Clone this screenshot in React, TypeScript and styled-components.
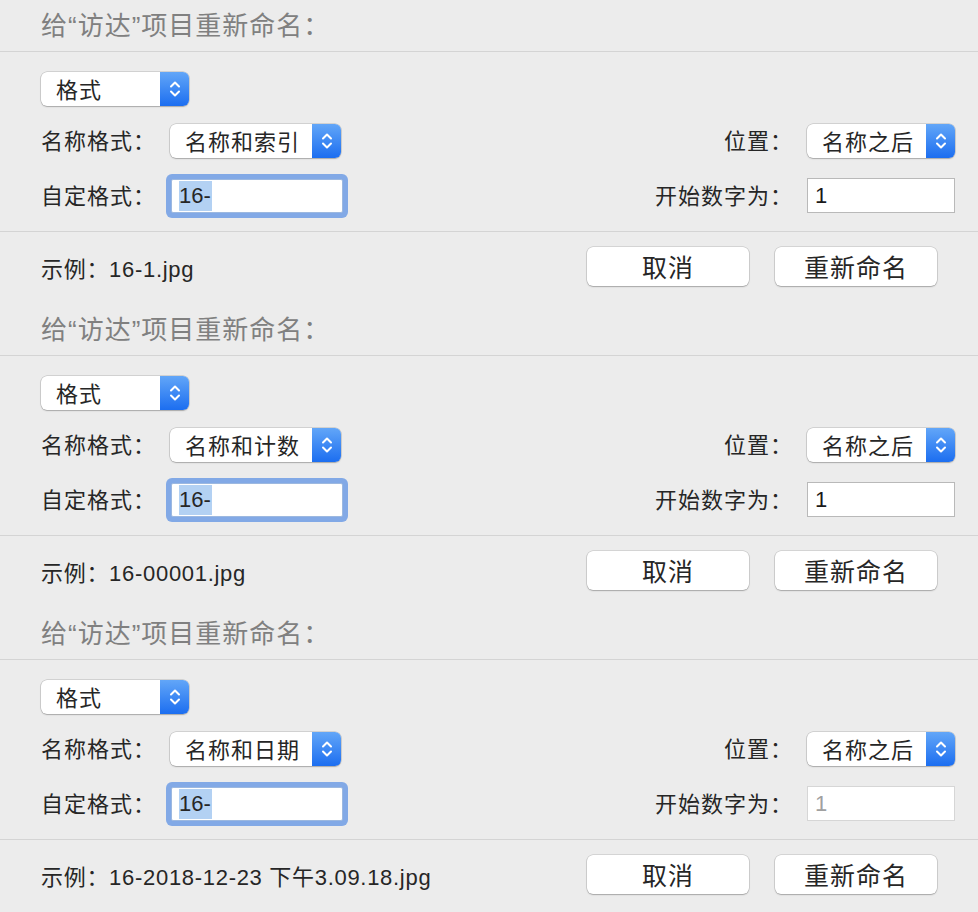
import React from 'react';
import styled, { createGlobalStyle } from 'styled-components';

const GlobalStyle = createGlobalStyle`
	body {
		margin: 0;
		background: #ececec;
		font-family: "Liberation Sans", "Noto Sans CJK SC", sans-serif;
		color: #262626;
	}
`;

type DialogData = {
	format: string;
	example: string;
	startDisabled?: boolean;
};

const dialogs: DialogData[] = [
	{ format: '名称和索引', example: '16-1.jpg' },
	{ format: '名称和计数', example: '16-00001.jpg' },
	{ format: '名称和日期', example: '16-2018-12-23 下午3.09.18.jpg', startDisabled: true },
];

const Stepper = () => (
	<StepperBox>
		<svg width="14" height="22" viewBox="0 0 14 22" fill="none">
			<path d="M3 8.5 L7 4.5 L11 8.5" stroke="#fff" strokeWidth="2" strokeLinecap="round" strokeLinejoin="round" />
			<path d="M3 13.5 L7 17.5 L11 13.5" stroke="#fff" strokeWidth="2" strokeLinecap="round" strokeLinejoin="round" />
		</svg>
	</StepperBox>
);

const Popup = (props: { text: string; width: number }) => (
	<PopupBox $width={props.width}>
		<PopupText>{props.text}</PopupText>
		<Stepper />
	</PopupBox>
);

const RenameDialog = ({ data }: { data: DialogData }) => (
	<Dialog>
		<TitleBar>给“访达”项目重新命名：</TitleBar>
		<Body>
			<FirstRow>
				<Popup text="格式" width={148} />
			</FirstRow>
			<FieldRow $h={34} $mb={15}>
				<Group>
					<Label>名称格式：</Label>
					<Popup text={data.format} width={171} />
				</Group>
				<Group>
					<RightLabel>位置：</RightLabel>
					<Popup text="名称之后" width={148} />
				</Group>
			</FieldRow>
			<FieldRow $h={45} $mb={0}>
				<Group>
					<Label>自定格式：</Label>
					<FocusInput>
						<Selected>16-</Selected>
					</FocusInput>
				</Group>
				<Group>
					<RightLabel>开始数字为：</RightLabel>
					<NumberInput $disabled={!!data.startDisabled}>1</NumberInput>
				</Group>
			</FieldRow>
		</Body>
		<Footer>
			<Example>示例：{data.example}</Example>
			<Buttons>
				<PushButton>取消</PushButton>
				<PushButton>重新命名</PushButton>
			</Buttons>
		</Footer>
	</Dialog>
);

const App = () => (
	<Page>
		<GlobalStyle />
		{dialogs.map((d, i) => (
			<RenameDialog key={i} data={d} />
		))}
	</Page>
);

export default App;

const Page = styled.div`
	width: 978px;
	height: 912px;
	overflow: hidden;
	background: #ececec;
`;

const Dialog = styled.section`
	height: 304px;
	display: flex;
	flex-direction: column;
`;

const TitleBar = styled.div`
	box-sizing: border-box;
	height: 52px;
	padding: 0 0 5px 41px;
	display: flex;
	align-items: center;
	font-size: 26px;
	color: #808080;
	border-bottom: 1px solid #d4d4d4;
	letter-spacing: 1px;
`;

const Body = styled.div`
	box-sizing: border-box;
	height: 180px;
	padding: 20px 23px 0 41px;
	display: flex;
	flex-direction: column;
	border-bottom: 1px solid #d4d4d4;
`;

const FirstRow = styled.div`
	display: flex;
	margin-bottom: 18px;
`;

const FieldRow = styled.div<{ $h: number; $mb: number }>`
	display: flex;
	align-items: center;
	justify-content: space-between;
	height: ${(p) => p.$h}px;
	margin-bottom: ${(p) => p.$mb}px;
`;

const Group = styled.div`
	display: flex;
	align-items: center;
`;

const Label = styled.div`
	width: 129px;
	font-size: 22px;
	letter-spacing: 1px;
	margin-top: -4px;
`;

const RightLabel = styled.div`
	font-size: 22px;
	letter-spacing: 1px;
	text-align: right;
	margin: -4px 14px 0 0;
`;

const PopupBox = styled.div<{ $width: number }>`
	box-sizing: border-box;
	width: ${(p) => p.$width}px;
	height: 34px;
	display: flex;
	background: #fff;
	border-radius: 6px;
	box-shadow: 0 0 0 0.5px rgba(0, 0, 0, 0.22), 0 1px 1.5px rgba(0, 0, 0, 0.2);
	overflow: hidden;
`;

const PopupText = styled.div`
	flex: 1;
	display: flex;
	align-items: center;
	padding: 0 0 3px 15px;
	font-size: 22px;
	letter-spacing: 1px;
`;

const StepperBox = styled.div`
	width: 29px;
	display: flex;
	align-items: center;
	justify-content: center;
	background: linear-gradient(#62a6f8, #1c6ef0);
`;

const FocusInput = styled.div`
	box-sizing: border-box;
	width: 172px;
	height: 34px;
	margin-left: 1px;
	display: flex;
	align-items: center;
	padding-left: 7px;
	background: #fff;
	border: 1px solid #9cb8e0;
	box-shadow: 0 0 0 5px #82a9e6;
	border-radius: 2px;
	font-size: 22px;
`;

const Selected = styled.span`
	background: #b3d1f3;
	line-height: 30px;
	padding-right: 1px;
`;

const NumberInput = styled.div<{ $disabled: boolean }>`
	box-sizing: border-box;
	width: 148px;
	height: 35px;
	display: flex;
	align-items: center;
	padding-left: 7px;
	background: #fff;
	border: 1px solid ${(p) => (p.$disabled ? '#d6d6d6' : '#b9b9b9')};
	font-size: 22px;
	color: ${(p) => (p.$disabled ? '#a0a0a0' : '#1a1a1a')};
`;

const Footer = styled.div`
	flex: 1;
	display: flex;
	align-items: center;
	padding: 0 41px 3px;
`;

const Example = styled.div`
	font-size: 22px;
	letter-spacing: 0.7px;
`;

const Buttons = styled.div`
	margin-left: auto;
	display: flex;
	gap: 26px;
`;

const PushButton = styled.div`
	box-sizing: border-box;
	width: 162px;
	height: 39px;
	display: flex;
	align-items: center;
	justify-content: center;
	padding-bottom: 2px;
	background: #fff;
	border-radius: 6px;
	box-shadow: 0 0 0 0.5px rgba(0, 0, 0, 0.2), 0 1px 1.5px rgba(0, 0, 0, 0.22);
	font-size: 25px;
	letter-spacing: 1px;
`;
